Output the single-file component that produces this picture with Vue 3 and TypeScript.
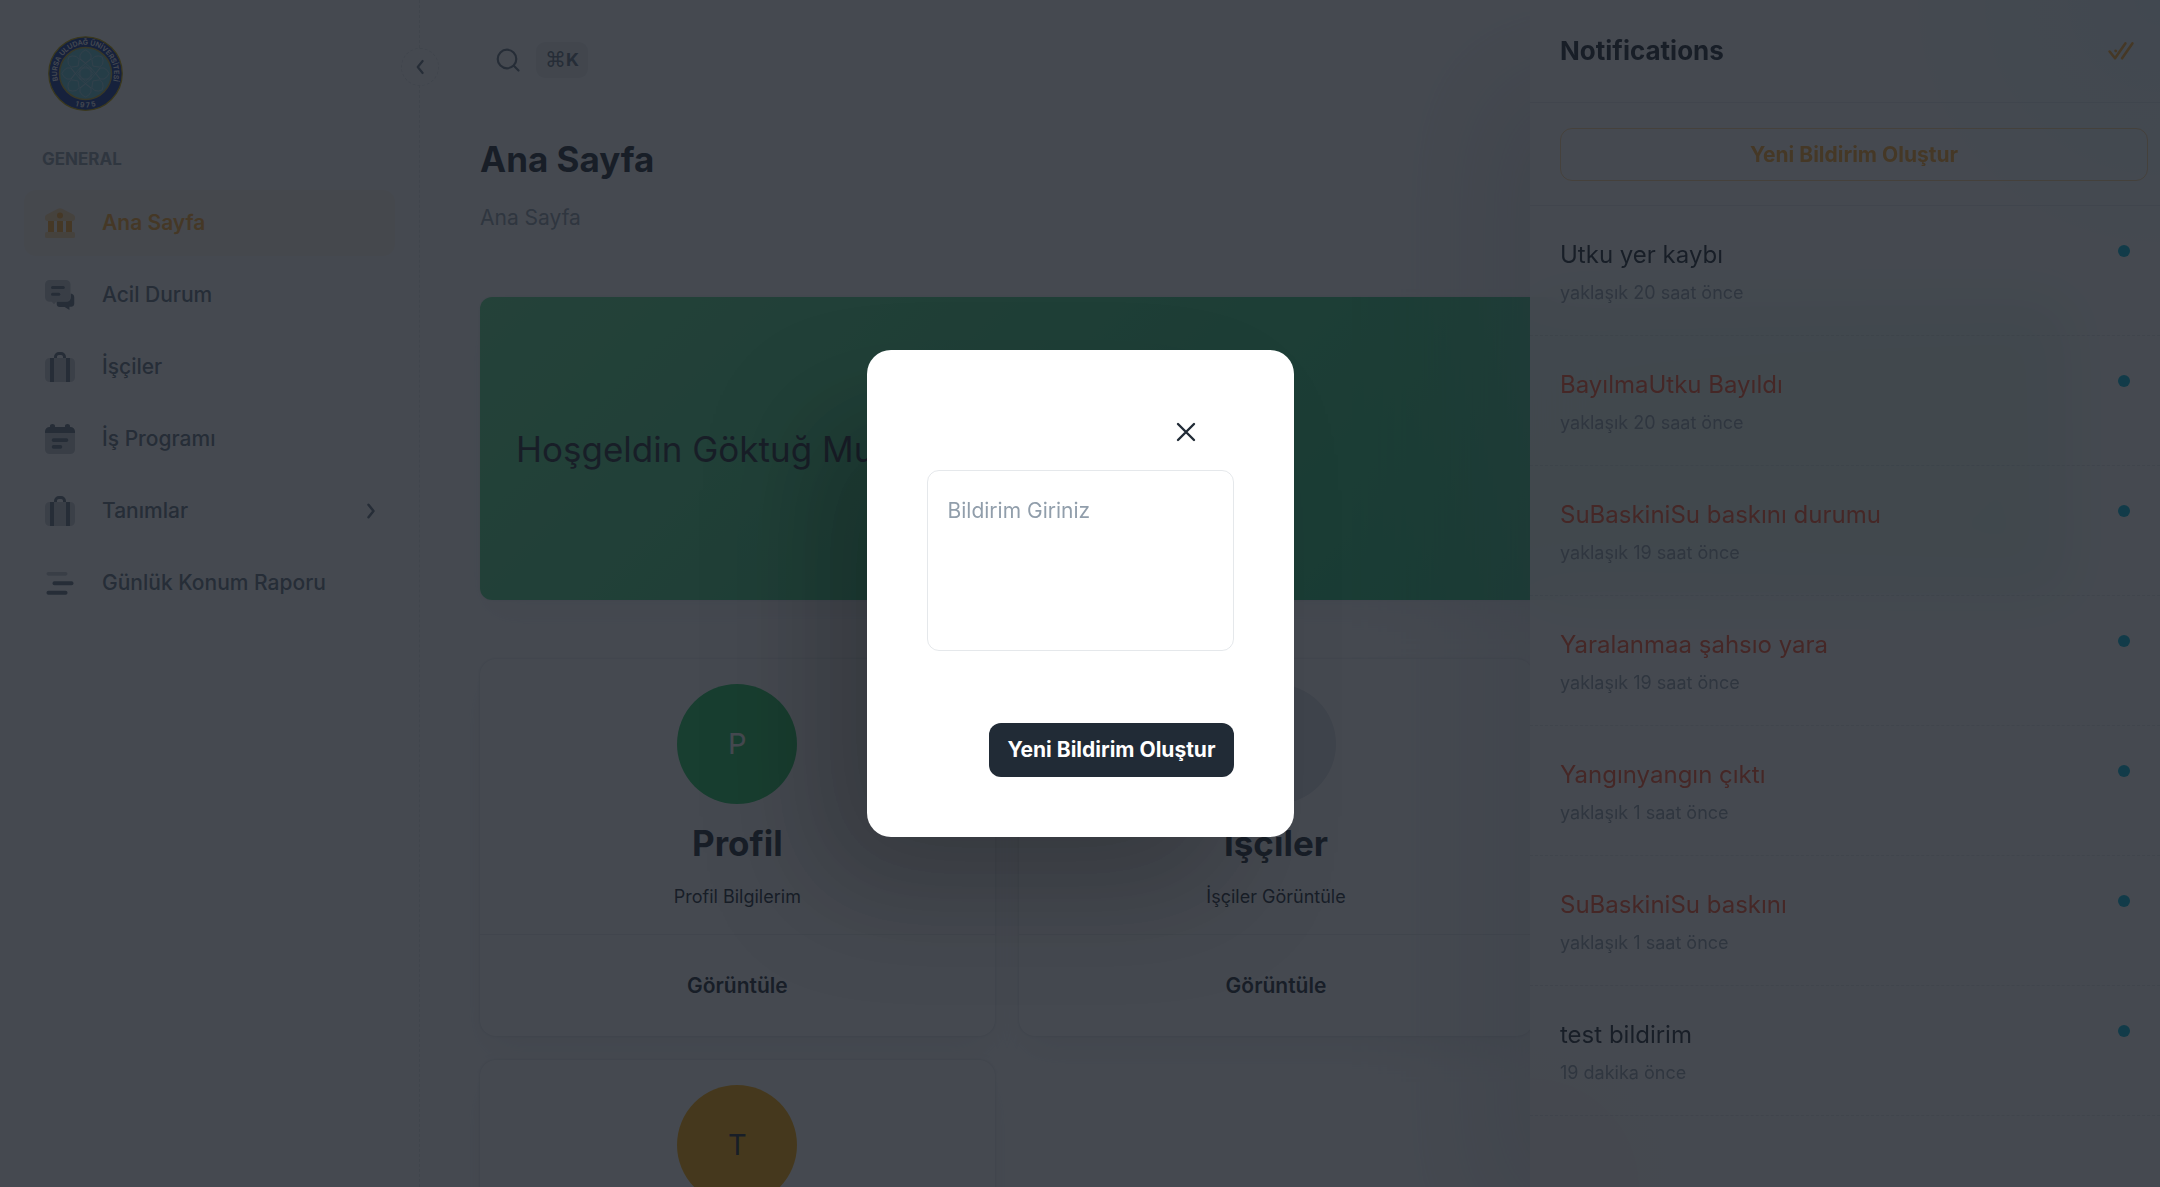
<script setup lang="ts">
import { ref } from 'vue'

interface NavItem {
  label: string
  icon: 'bank' | 'chat' | 'case' | 'calendar' | 'menu'
  active?: boolean
  children?: boolean
}

interface Shortcut {
  letter: string
  tone: 'green' | 'grey' | 'amber'
  title?: string
  caption?: string
}

interface Notice {
  title: string
  time: string
  urgent: boolean
}

const navItems: NavItem[] = [
  { label: 'Ana Sayfa', icon: 'bank', active: true },
  { label: 'Acil Durum', icon: 'chat' },
  { label: 'İşçiler', icon: 'case' },
  { label: 'İş Programı', icon: 'calendar' },
  { label: 'Tanımlar', icon: 'case', children: true },
  { label: 'Günlük Konum Raporu', icon: 'menu' },
]

const shortcuts: Shortcut[] = [
  { letter: 'P', tone: 'green', title: 'Profil', caption: 'Profil Bilgilerim' },
  { letter: 'İ', tone: 'grey', title: 'İşçiler', caption: 'İşçiler Görüntüle' },
  { letter: 'T', tone: 'amber' },
]

const notices: Notice[] = [
  { title: 'Utku yer kaybı', time: 'yaklaşık 20 saat önce', urgent: false },
  { title: 'BayılmaUtku Bayıldı', time: 'yaklaşık 20 saat önce', urgent: true },
  { title: 'SuBaskiniSu baskını durumu', time: 'yaklaşık 19 saat önce', urgent: true },
  { title: 'Yaralanmaa şahsıo yara', time: 'yaklaşık 19 saat önce', urgent: true },
  { title: 'Yangınyangın çıktı', time: 'yaklaşık 1 saat önce', urgent: true },
  { title: 'SuBaskiniSu baskını', time: 'yaklaşık 1 saat önce', urgent: true },
  { title: 'test bildirim', time: '19 dakika önce', urgent: false },
]

const petals = [0, 45, 90, 135, 180, 225, 270, 315]
const message = ref('')
</script>

<template>
  <div class="shell">
    <aside class="sidebar">
      <a class="logo" href="#" aria-label="Bursa Uludağ Üniversitesi">
        <svg viewBox="0 0 150 150" width="75" height="75">
          <defs>
            <path id="ring-top" d="M26 103.500 A57 57 0 1 1 124 103.500" />
            <path id="ring-bottom" d="M27 123 A68 68 0 0 0 123 123" />
          </defs>
          <circle cx="75" cy="75" r="73.500" fill="#14379b" stroke="#c8a800" stroke-width="2.500" />
          <circle cx="75" cy="75" r="52" fill="#62c0d2" stroke="#b8a838" stroke-width="3" />
          <g fill="none" stroke="#a4d6e4" stroke-width="1.600">
            <path
              v-for="angle in petals"
              :key="angle"
              :transform="`rotate(${angle} 75 75)`"
              d="M75 54 L64 46 V38 Q67 31 75 28 Q83 31 86 38 V46 Z"
            />
            <rect x="64" y="64" width="22" height="22" />
            <rect x="64" y="64" width="22" height="22" transform="rotate(45 75 75)" />
            <path d="M64 46 86 64M86 46 64 64M64 104 86 86M86 104 64 86M46 64 64 86M46 86 64 64M104 64 86 86M104 86 86 64" />
          </g>
          <g class="logo-text">
            <text><textPath href="#ring-top" startOffset="50%" text-anchor="middle">BURSA ULUDAĞ ÜNİVERSİTESİ</textPath></text>
            <text><textPath href="#ring-bottom" startOffset="50%" text-anchor="middle">1 9 7 5</textPath></text>
          </g>
        </svg>
      </a>
      <h2 class="nav-heading">GENERAL</h2>
      <nav class="nav">
        <a
          v-for="item in navItems"
          :key="item.label"
          href="#"
          class="nav-item"
          :class="{ active: item.active }"
        >
          <svg class="nav-icon" viewBox="0 0 24 24" fill="currentColor" aria-hidden="true">
            <template v-if="item.icon === 'bank'">
              <path
                opacity=".4"
                d="M3.200 6.300 10.600 2.500a3 3 0 0 1 2.800 0l7.400 3.800C21.600 6.700 22 7.400 22 8.200v.8c0 1-.6 1.700-1.500 1.700h-17C2.600 10.700 2 10 2 9v-.8c0-.8.4-1.500 1.200-1.900Z"
              />
              <rect opacity=".4" x="2" y="18" width="20" height="4" rx="1" />
              <path d="M4 10.700h4V18H4zM10 10.700h4V18h-4zM16 10.700h4V18h-4z" />
              <circle cx="12" cy="7" r="2" />
            </template>
            <template v-else-if="item.icon === 'chat'">
              <path
                opacity=".4"
                d="M5 2h11a3 3 0 0 1 3 3v8.500a3 3 0 0 1-3 3H9.500L8 18.200 6.500 16.500H5a3 3 0 0 1-3-3V5a3 3 0 0 1 3-3Z"
              />
              <rect x="6" y="6" width="9.200" height="2" rx="1" />
              <rect x="6" y="10.500" width="6.200" height="2" rx="1" />
              <path
                d="M19.200 11c1.400.2 2.300 1 2.300 2.500v4.300c0 1.200-.9 2-2 2h-1.200V22l-3.200-2h-3.300c-1.200 0-2-.8-2-2v-1.500h6.200c2 0 3.200-1.200 3.200-3Z"
              />
            </template>
            <template v-else-if="item.icon === 'case'">
              <path opacity=".32" d="M5.300 6H5a3 3 0 0 0-3 3v10a3 3 0 0 0 3 3h.3ZM18.700 6h.3a3 3 0 0 1 3 3v10a3 3 0 0 1-3 3h-.3Z" />
              <path opacity=".4" d="M8 6h8v16H8z" />
              <path d="M5.300 6H8v16H5.300zM16 6h2.700v16H16z" />
              <path d="M8 6V5.300A3.300 3.300 0 0 1 11.300 2h1.400A3.300 3.300 0 0 1 16 5.300V6h-2v-.7c0-.8-.5-1.300-1.300-1.300h-1.400c-.8 0-1.300.5-1.300 1.300V6Z" />
            </template>
            <template v-else-if="item.icon === 'calendar'">
              <path opacity=".4" d="M2 8h20v11a3 3 0 0 1-3 3H5a3 3 0 0 1-3-3Z" />
              <path
                d="M7 2c1 0 1.700.6 1.700 1.500V4h6.600v-.5c0-.9.700-1.500 1.700-1.500s1.700.6 1.700 1.500V4h.3a3 3 0 0 1 3 3v1H2V7a3 3 0 0 1 3-3h.3v-.5C5.300 2.600 6 2 7 2Z"
              />
              <rect x="6.500" y="11.500" width="11" height="2.500" rx="1.200" />
              <rect x="6.500" y="16" width="7" height="2.500" rx="1.200" />
            </template>
            <template v-else>
              <rect opacity=".4" x="3" y="4.700" width="14" height="2.400" rx="1.200" />
              <rect x="7" y="10.900" width="14" height="2.600" rx="1.200" />
              <rect x="3" y="17.200" width="14" height="2.600" rx="1.200" />
            </template>
          </svg>
          <span class="nav-label">{{ item.label }}</span>
          <svg v-if="item.children" class="nav-arrow" viewBox="0 0 24 24" aria-hidden="true">
            <path d="m9 4.500 6 7.500-6 7.500" />
          </svg>
        </a>
      </nav>
      <button class="collapse" type="button" aria-label="Menüyü daralt">
        <svg viewBox="0 0 24 24" aria-hidden="true"><path d="M15.500 4 9 12l6.500 8" /></svg>
      </button>
    </aside>

    <div class="content">
      <header class="topbar">
        <button class="search" type="button" aria-label="Ara">
          <svg viewBox="0 0 24 24" aria-hidden="true">
            <circle cx="11" cy="11" r="9.300" />
            <path d="m17.800 17.800 4.700 4.700" />
          </svg>
        </button>
        <kbd class="shortcut-key"><span class="command">⌘</span>K</kbd>
      </header>

      <main class="main">
        <h1 class="page-title">Ana Sayfa</h1>
        <p class="crumb">Ana Sayfa</p>

        <section class="banner">
          <h2 class="banner-text">Hoşgeldin Göktuğ Mu</h2>
        </section>

        <div class="cards">
          <article v-for="card in shortcuts" :key="card.letter" class="card">
            <div class="card-body">
              <span class="avatar" :class="card.tone">{{ card.letter }}</span>
              <template v-if="card.title">
                <h3 class="card-title">{{ card.title }}</h3>
                <p class="card-caption">{{ card.caption }}</p>
              </template>
            </div>
            <div v-if="card.title" class="card-foot">
              <button class="card-action" type="button">Görüntüle</button>
            </div>
          </article>
        </div>
      </main>
    </div>

    <aside class="drawer">
      <header class="drawer-head">
        <h2 class="drawer-title">Notifications</h2>
        <button class="mark-all" type="button" aria-label="Mark all as read">
          <svg viewBox="0 0 24 24" aria-hidden="true">
            <path d="m1.500 12.500 5 6.200L16 5M13 18.700 22.500 5M7 11.800l.2.200" />
          </svg>
        </button>
      </header>
      <div class="drawer-action">
        <button class="outline-button" type="button">Yeni Bildirim Oluştur</button>
      </div>
      <ul class="notices">
        <li v-for="(notice, index) in notices" :key="index" class="notice">
          <div>
            <p class="notice-title" :class="{ urgent: notice.urgent }">{{ notice.title }}</p>
            <p class="notice-time">{{ notice.time }}</p>
          </div>
          <span class="unread"></span>
        </li>
      </ul>
    </aside>

    <div class="backdrop">
      <form class="dialog" role="dialog" aria-modal="true" @submit.prevent>
        <div class="dialog-head">
          <button class="close" type="button" aria-label="Kapat">
            <svg viewBox="0 0 24 24" aria-hidden="true"><path d="m4 4 16 16M20 4 4 20" /></svg>
          </button>
        </div>
        <textarea v-model="message" class="message" placeholder="Bildirim Giriniz" aria-label="Bildirim Giriniz"></textarea>
        <button class="submit" type="submit">Yeni Bildirim Oluştur</button>
      </form>
    </div>
  </div>
</template>

<style>
body {
  margin: 0;
  overflow: hidden;
}
</style>

<style scoped>
.shell,
.shell * {
  box-sizing: border-box;
}

.shell {
  position: relative;
  display: flex;
  height: 100vh;
  overflow: hidden;
  background: #fff;
  color: #212b36;
  font-family: Inter, "Liberation Sans", sans-serif;
  font-size: 21px;
  line-height: 32px;
}

h1,
h2,
h3,
p,
ul {
  margin: 0;
  padding: 0;
}

button,
textarea {
  font: inherit;
  color: inherit;
}

button {
  display: flex;
  align-items: center;
  justify-content: center;
  padding: 0;
  border: 0;
  background: none;
}

/* Sidebar */
.sidebar {
  position: relative;
  flex: none;
  width: 420px;
  padding: 36px 24px;
  border-right: 1px dashed rgba(145, 158, 171, 0.24);
}

.logo {
  display: flex;
  width: 75px;
  margin-left: 24px;
}

.logo-text {
  fill: #fff;
  font-size: 14px;
  font-weight: 600;
}

.nav-heading {
  margin-top: 36px;
  padding: 0 18px;
  color: #919eab;
  font-size: 17px;
  font-weight: 700;
  line-height: 24px;
}

.nav {
  display: flex;
  flex-direction: column;
  gap: 6px;
  margin-top: 19px;
}

.nav-item {
  display: flex;
  align-items: center;
  height: 66px;
  padding: 0 18px;
  border-radius: 12px;
  color: #637381;
  font-weight: 500;
  text-decoration: none;
}

.nav-item.active {
  background: rgba(253, 169, 45, 0.08);
  color: #fda92d;
  font-weight: 600;
}

.nav-icon {
  width: 36px;
  height: 36px;
  margin-right: 24px;
}

.nav-label {
  flex: 1;
}

.nav-arrow {
  width: 20px;
  height: 20px;
  margin-right: -4px;
}

.nav-arrow path,
.collapse path {
  fill: none;
  stroke: currentColor;
  stroke-width: 3;
  stroke-linecap: round;
  stroke-linejoin: round;
}

.collapse {
  position: absolute;
  top: 48px;
  right: -20px;
  width: 38px;
  height: 38px;
  border: 1px dashed rgba(145, 158, 171, 0.24);
  border-radius: 50%;
  background: #fff;
  color: #637381;
}

.collapse svg {
  width: 18px;
  height: 18px;
}

/* Main column */
.content {
  flex: 1;
  min-width: 0;
  padding: 0 88px 0 60px;
}

.topbar {
  display: flex;
  align-items: center;
  gap: 10px;
  height: 120px;
  padding-left: 10px;
}

.search {
  width: 36px;
  height: 36px;
  color: #637381;
}

.search svg {
  width: 24px;
  height: 24px;
  fill: none;
  stroke: currentColor;
  stroke-width: 2.2;
  stroke-linecap: round;
}

.shortcut-key {
  display: flex;
  height: 36px;
  padding: 0 9px;
  border-radius: 9px;
  background: rgba(145, 158, 171, 0.16);
  color: #637381;
  font-family: inherit;
  font-size: 18px;
  font-weight: 700;
  line-height: 36px;
}

.command {
  font-family: "DejaVu Sans", sans-serif;
  font-size: 21px;
  font-weight: 400;
}

.main {
  display: flex;
  flex-direction: column;
}

.page-title {
  margin-top: 12px;
  font-size: 35px;
  font-weight: 700;
  line-height: 54px;
}

.crumb {
  margin-top: 16px;
  color: #919eab;
}

.banner {
  display: flex;
  align-items: center;
  height: 303px;
  margin-top: 63px;
  padding: 0 36px;
  border-radius: 12px;
  background: linear-gradient(135deg, #5bd98c, #0cae6a);
  box-shadow: 0 0 3px rgba(145, 158, 171, 0.2), 0 18px 36px -6px rgba(145, 158, 171, 0.12);
}

.banner-text {
  font-size: 35px;
  font-weight: 400;
  line-height: 54px;
}

.cards {
  display: grid;
  grid-template-columns: repeat(3, 1fr);
  gap: 24px;
  margin-top: 59px;
}

.card:nth-child(3) {
  grid-column: 1;
}

.card {
  border-radius: 16px;
  background: #fff;
  box-shadow: 0 0 3px rgba(145, 158, 171, 0.4), 0 18px 36px -6px rgba(145, 158, 171, 0.16);
}

.card-body {
  display: flex;
  flex-direction: column;
  align-items: center;
  height: 275px;
  padding-top: 25px;
}

.avatar {
  display: flex;
  align-items: center;
  justify-content: center;
  width: 120px;
  height: 120px;
  border-radius: 50%;
  font-size: 29px;
}

.avatar.green {
  background: #22c55e;
  color: #fff;
}

.avatar.grey {
  background: #dfe3e8;
  color: #637381;
}

.avatar.amber {
  background: #ffab00;
}

.card-title {
  margin-top: 12px;
  font-size: 35px;
  font-weight: 700;
  line-height: 54px;
}

.card-caption {
  margin-top: 13px;
  font-size: 18px;
  line-height: 27px;
}

.card-foot {
  display: flex;
  align-items: center;
  justify-content: center;
  height: 102px;
  border-top: 1px solid rgba(145, 158, 171, 0.2);
}

.card-action {
  font-weight: 600;
}

/* Notification drawer */
.drawer {
  position: absolute;
  top: 0;
  right: 0;
  bottom: 0;
  width: 630px;
  background:
    radial-gradient(circle at 100% 0, rgba(0, 184, 217, 0.08), transparent 300px),
    radial-gradient(circle at 0 100%, rgba(255, 86, 48, 0.03), transparent 300px),
    rgba(255, 255, 255, 0.9);
  box-shadow: -60px 60px 120px -12px rgba(145, 158, 171, 0.24);
  backdrop-filter: blur(30px);
}

.drawer-head {
  display: flex;
  align-items: center;
  justify-content: space-between;
  height: 103px;
  padding: 0 26px 0 30px;
  border-bottom: 1px solid rgba(145, 158, 171, 0.2);
}

.drawer-title {
  font-size: 26px;
  font-weight: 700;
}

.mark-all {
  width: 26px;
  height: 26px;
  color: #fda92d;
}

.mark-all svg {
  width: 26px;
  height: 26px;
  fill: none;
  stroke: currentColor;
  stroke-width: 2.4;
  stroke-linecap: round;
  stroke-linejoin: round;
}

.drawer-action {
  padding: 25px 12px 24px 30px;
  border-bottom: 1px solid rgba(145, 158, 171, 0.2);
}

.outline-button {
  width: 100%;
  height: 53px;
  border: 1px solid rgba(253, 169, 45, 0.48);
  border-radius: 12px;
  color: #fda92d;
  font-weight: 700;
}

.notices {
  list-style: none;
}

.notice {
  display: flex;
  justify-content: space-between;
  height: 130px;
  padding: 30px;
  border-bottom: 1px dashed rgba(145, 158, 171, 0.24);
}

.notice-title {
  font-size: 24px;
  line-height: 38px;
}

.notice-title.urgent {
  color: #ff5630;
}

.notice-time {
  margin-top: 5px;
  color: #919eab;
  font-size: 18px;
  line-height: 27px;
}

.unread {
  width: 12px;
  height: 12px;
  margin-top: 9px;
  border-radius: 50%;
  background: #00b8d9;
}

/* Dialog */
.backdrop {
  position: absolute;
  inset: 0;
  display: flex;
  align-items: center;
  justify-content: center;
  background: rgba(22, 28, 36, 0.8);
}

.dialog {
  display: flex;
  flex-direction: column;
  width: 427px;
  padding: 60px;
  border-radius: 24px;
  background: #fff;
  box-shadow: -60px 60px 120px -12px rgba(0, 0, 0, 0.24);
}

.dialog-head {
  display: flex;
  justify-content: flex-end;
  height: 60px;
  padding: 4px 30px 0;
}

.close {
  width: 36px;
  height: 36px;
}

.close svg {
  width: 24px;
  height: 24px;
  fill: none;
  stroke: currentColor;
  stroke-width: 2.4;
  stroke-linecap: round;
}

.message {
  height: 181px;
  padding: 24px 20px;
  border: 1px solid rgba(145, 158, 171, 0.24);
  border-radius: 12px;
  background: none;
  resize: none;
  outline: none;
}

.message::placeholder {
  color: #919eab;
  opacity: 1;
}

.submit {
  align-self: flex-end;
  height: 54px;
  margin-top: 72px;
  padding: 0 18px;
  border-radius: 12px;
  background: #212b36;
  color: #fff;
  font-weight: 700;
}
</style>
